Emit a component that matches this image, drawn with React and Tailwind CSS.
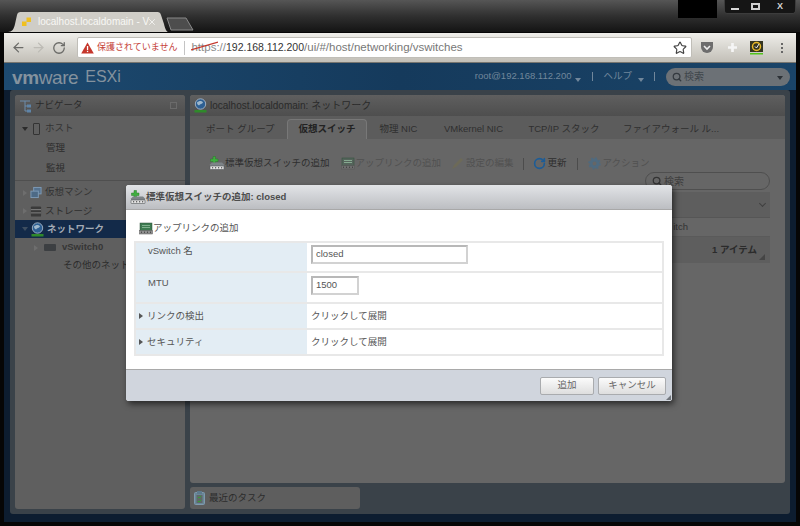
import { ArrowLeft, ArrowRight, RotateCw, Star, Search, X } from "lucide-react";

const fontStack = { fontFamily: '"Liberation Sans", "Noto Sans CJK JP", sans-serif' };

const Caret = ({ className = "border-t-[#38434d]" }) => (
  <span className={`inline-block w-0 h-0 border-x-[3px] border-x-transparent border-t-[4px] ${className}`} />
);

const SideArrow = ({ className = "border-l-[#505050]" }) => (
  <span className={`inline-block w-0 h-0 border-y-[3.5px] border-y-transparent border-l-[4px] ${className}`} />
);

const GlobeIcon = () => (
  <svg width="13" height="15" viewBox="0 0 13 15" className="shrink-0">
    <circle cx="6.5" cy="6" r="5.2" fill="#2d5f93" stroke="#b4c2d0" strokeWidth="0.8" />
    <path d="M3 4.5c2-2 5-2 6 0-1 2-3 1-4 3-1-1-2-1-2-3z" fill="#9fb8cc" />
    <rect x="0.5" y="12" width="12" height="2.5" fill="#2f8a2a" />
  </svg>
);

const AddSwitchIcon = () => (
  <svg width="16" height="15" viewBox="0 0 16 15" className="shrink-0">
    <path d="M4 0.5h2.5v2.5H9v2.5H6.5V8H4V5.5H1.5V3H4z" fill="#3fae3f" stroke="#2a7a2a" strokeWidth="0.5" />
    <path d="M1 8.5L3 6.5H13L15 8.5V10H1Z" fill="#7d8387" />
    <rect x="1" y="10" width="14" height="3.5" rx="0.5" fill="#e2e2e2" stroke="#55595c" strokeWidth="0.6" />
    <path d="M3 11.8h1.2M6 11.8h1.2M9 11.8h1.2M12 11.8h1.2" stroke="#333" />
  </svg>
);

const UplinkIcon = ({ top = "#3d7a50", base = "#8f8f8f" }) => (
  <svg width="16" height="15" viewBox="0 0 16 15" className="shrink-0">
    <rect x="2" y="2" width="12" height="7.5" fill={top} stroke="#2f4f3a" strokeWidth="0.5" />
    <path d="M4 4.5h8M4 6.5h8" stroke="#9cc7a8" strokeWidth="0.7" />
    <rect x="1.5" y="9.5" width="13" height="3.5" fill={base} stroke="#555" strokeWidth="0.5" />
    <path d="M3 11.2h1M6 11.2h1M9 11.2h1M12 11.2h1" stroke="#333" />
  </svg>
);

const NavRow = ({ children, className = "", pl = "pl-[22px]" }) => (
  <div className={`flex items-center gap-[3px] text-[9.5px] text-[#2c2c2c] whitespace-nowrap ${pl} ${className}`}>{children}</div>
);

const FormRow = ({ label, arrow, height, children, labelPad, valuePad }) => (
  <div className={`flex border-b-2 border-[#e8e8e8] last:border-b-0 ${height}`}>
    <div className={`w-[171px] bg-[#e3edf4] flex text-[9.5px] text-[#555] ${arrow ? "items-center pl-[3px] gap-[4px]" : `pl-[12px] ${labelPad}`}`}>
      {arrow && <SideArrow className="border-l-[#555]" />}
      <span>{label}</span>
    </div>
    <div className={`flex-1 text-[9.5px] text-[#555] pl-[4px] ${arrow ? "flex items-center" : valuePad}`}>{children}</div>
  </div>
);

const TextBox = ({ width, value }) => (
  <div className={`${width} h-[19px] border-2 border-[#d2d2d2] border-t-[#b8b8b8] border-l-[#b8b8b8] bg-white flex items-center px-[3px] text-[9.5px] text-[#555]`}>{value}</div>
);

const FooterButton = ({ width, children }) => (
  <button className={`${width} h-[18px] rounded-[2px] border border-[#a9abae] bg-gradient-to-b from-[#fbfbfb] to-[#dedede] text-[9.5px] text-[#666] flex items-center justify-center`}>
    {children}
  </button>
);

export default function App() {
  return (
    <div style={fontStack} className="relative w-[800px] h-[526px] overflow-hidden bg-[#060606] flex flex-col">
      {/* window title bar */}
      <div className="h-[32px] shrink-0 flex bg-gradient-to-b from-[#565656] via-[#303030] to-[#141414] pl-[8px]">
        <div className="relative w-[160px] h-[21px] mt-[11px] flex items-center">
          <svg className="absolute inset-0" width="160" height="21" viewBox="0 0 160 21" preserveAspectRatio="none">
            <path d="M0 21C4 21 6 18 7 13L9 4C10 1 11 1 14 1H148C151 1 152 1 153 4L156 13C157 18 159 21 160 21Z" fill="#cfcdc7" />
          </svg>
          <svg className="absolute left-[14px] top-[6px]" width="10" height="10" viewBox="0 0 10 10">
            <rect x="4.5" y="0.5" width="4.5" height="4.5" fill="#f0c020" />
            <rect x="0" y="4.5" width="4.5" height="4.5" fill="#f0c020" />
          </svg>
          <span className="relative ml-[30px] w-[109px] text-[10px] text-[#f8f8f5] whitespace-nowrap">localhost.localdomain - V</span>
          <X className="relative text-[#f6f6f4]" size={10} strokeWidth={2} />
        </div>
        <svg className="mt-[17px] ml-[-2px]" width="28" height="14" viewBox="0 0 28 14">
          <path d="M1 1H20L27 13H5Z" fill="#4d4d4d" stroke="#8a8a8a" />
        </svg>
        <div className="ml-auto flex items-start">
          <div className="w-[39px] h-[18px] bg-black" />
          <div className="ml-[7px] mr-[4px] w-[72px] h-[14px] rounded-b-[3px] bg-[#151515] border border-[#3c3c3c] border-t-0 flex items-center text-[#d4d4d4]">
            <span className="w-[20px] flex justify-center pt-[5px]"><span className="block w-[8px] h-[2px] bg-[#d8d8d8]" /></span>
            <span className="w-[20px] flex justify-center"><span className="block w-[9px] h-[7px] border-2 border-[#d0d0d0]" /></span>
            <span className="flex-1 text-center text-[9px] font-bold leading-none">X</span>
          </div>
        </div>
      </div>

      {/* browser frame */}
      <div className="flex-1 mx-[4px] mb-[4px] mt-[1px] flex flex-col min-h-0">
        {/* browser toolbar */}
        <div className="h-[30px] shrink-0 flex items-center bg-gradient-to-b from-[#efeeea] to-[#c2bfb7] border-b border-[#77756f] pl-[7px] pr-[7px]">
          <ArrowLeft size={15} strokeWidth={2} className="text-[#6b6b68]" />
          <ArrowRight size={15} strokeWidth={2} className="text-[#bdbbb5] ml-[5px]" />
          <RotateCw size={14} strokeWidth={2.2} className="text-[#6b6b68] ml-[6px]" />
          <div className="ml-[11px] w-[615px] h-[21px] bg-white rounded-[2px] border border-[#c0beb8] flex items-center pl-[3px] pr-[2px]">
            <svg width="13" height="12" viewBox="0 0 13 12">
              <path d="M6.5 0.5L12.8 11.5H0.2Z" fill="#c5372c" />
              <rect x="5.9" y="4" width="1.3" height="4" fill="#fff" />
              <rect x="5.9" y="8.8" width="1.3" height="1.3" fill="#fff" />
            </svg>
            <span className="ml-[3px] text-[9px] text-[#c5433a] whitespace-nowrap">保護されていません</span>
            <span className="ml-[7px] w-px h-[14px] bg-[#c4c4c4]" />
            <span className="relative ml-[6px] text-[11.5px] text-[#8a8a8a]">
              https
              <svg className="absolute left-0 top-[2px]" width="27" height="10" viewBox="0 0 27 10">
                <path d="M0 9L27 1" stroke="#c5372c" strokeWidth="1.2" />
              </svg>
            </span>
            <span className="text-[11.5px] text-[#8a8a8a]">://</span>
            <span className="text-[10.5px] text-[#333]">192.168.112.200</span>
            <span className="text-[11.5px] text-[#777]">/ui/#/host/networking/vswitches</span>
            <Star size={14} strokeWidth={2} className="ml-auto mr-[2px] text-[#444]" />
          </div>
          <svg className="ml-[8px]" width="14" height="13" viewBox="0 0 14 13">
            <path d="M1 1H13V6A6 6 0 0 1 1 6Z" fill="#6d6d6d" />
            <path d="M4 5L7 8L10 5" stroke="#eee" strokeWidth="1.6" fill="none" />
          </svg>
          <svg className="ml-[14px]" width="9" height="9" viewBox="0 0 10 10">
            <path d="M3.5 0H6.5V3.5H10V6.5H6.5V10H3.5V6.5H0V3.5H3.5Z" fill="#f5f5f5" />
          </svg>
          <svg className="ml-[13px]" width="13" height="14" viewBox="0 0 13 14">
            <rect width="13" height="11" fill="#353520" />
            <circle cx="6.5" cy="5.5" r="4" fill="none" stroke="#e8b828" strokeWidth="1.5" />
            <path d="M5 5.5L6.5 7L9 3" stroke="#f2f2f2" fill="none" />
            <rect y="12" width="13" height="1.5" fill="#52c41a" />
          </svg>
          <span className="ml-[18px] flex flex-col gap-[2px]">
            <span className="block w-[2px] h-[2px] bg-[#666]" />
            <span className="block w-[2px] h-[2px] bg-[#666]" />
            <span className="block w-[2px] h-[2px] bg-[#666]" />
          </span>
        </div>

        {/* ESXi app, dimmed behind the dialog */}
        <div className="flex-1 min-h-0 flex flex-col bg-[#0d1d30]">
          <div className="h-[27px] shrink-0 flex items-center bg-gradient-to-r from-[#1d4a70] via-[#153a5c] to-[#1a4468] pl-[8px] pr-[6px]">
            <span className="text-[19px] leading-none tracking-[-0.4px] text-[#84929e] pt-[1px]">
              <span className="font-bold">vm</span>ware
            </span>
            <span className="ml-[7px] text-[16px] leading-none text-[#84929e] pt-[1px]">ESXi</span>
            <span className="ml-auto text-[9.5px] text-[#71879b]">root@192.168.112.200</span>
            <span className="ml-[4px]"><Caret className="border-t-[#71879b]" /></span>
            <span className="ml-[11px] w-px h-[9px] bg-[#71879b]" />
            <span className="ml-[10px] text-[9.5px] text-[#71879b]">ヘルプ</span>
            <span className="ml-[6px]"><Caret className="border-t-[#71879b]" /></span>
            <span className="ml-[10px] w-px h-[9px] bg-[#71879b]" />
            <div className="ml-[11px] w-[124px] h-[18px] rounded-full bg-[#6c7176] flex items-center pl-[6px] pr-[7px] gap-[2px] text-[10px] text-[#3f464c]">
              <Search size={10} strokeWidth={3} className="text-[#33393f]" />
              <span>検索</span>
              <span className="ml-auto"><Caret className="border-t-[#2c3136]" /></span>
            </div>
          </div>

          <div className="flex-1 min-h-0 mx-[6px] mb-[8px] rounded-[3px] bg-[#3a4249] p-[5px] flex gap-[5px]">
            {/* navigator */}
            <div className="w-[170px] shrink-0 rounded-[3px] bg-[#5f5f5f] overflow-hidden flex flex-col">
              <div className="h-[21px] shrink-0 flex items-center pl-[4px] pr-[8px] gap-[3px] bg-gradient-to-b from-[#5f5f5f] to-[#4e4e4e] text-[9.5px] text-[#2a2a2a]">
                <svg width="13" height="14" viewBox="0 0 13 14">
                  <path d="M1 2H11M6 2V12H10M6 7H10" stroke="#6d8cab" fill="none" />
                  <rect x="8" y="5.5" width="4" height="3" fill="#5e84a8" />
                  <rect x="8" y="10.5" width="4" height="3" fill="#5e84a8" />
                </svg>
                <span>ナビゲータ</span>
                <span className="ml-auto w-[7px] h-[7px] border border-[#6b6b6b]" />
              </div>
              <div className="flex flex-col pt-[3px]">
                <NavRow className="h-[19px]" pl="pl-[7px]">
                  <Caret className="border-t-[#2b2b2b]" />
                  <span className="ml-[2px] w-[7px] h-[12px] rounded-[1px] border border-[#333]" />
                  <span className="ml-[2px] text-[#333]">ホスト</span>
                </NavRow>
                <NavRow className="h-[20px]" pl="pl-[31px]">管理</NavRow>
                <NavRow className="h-[20px]" pl="pl-[31px]">監視</NavRow>
                <div className="h-[3px] border-b border-[#4f4f4f] mb-[2px]" />
                <NavRow className="h-[19px]" pl="pl-[8px]">
                  <SideArrow className="border-l-[#6e6e6e]" />
                  <svg width="12" height="13" viewBox="0 0 13 13">
                    <rect x="4" y="1" width="8" height="7" fill="#55728f" stroke="#7f9cb8" />
                    <rect x="1" y="5" width="8" height="7" fill="#4d6a86" stroke="#7f9cb8" />
                  </svg>
                  <span className="text-[#333]">仮想マシン</span>
                </NavRow>
                <NavRow className="h-[18px]" pl="pl-[8px]">
                  <SideArrow className="border-l-[#6e6e6e]" />
                  <svg width="12" height="13" viewBox="0 0 13 13">
                    <rect x="1" y="1" width="11" height="11" rx="1" fill="#3a3a3a" />
                    <path d="M1 4.5H12M1 8H12" stroke="#888" />
                  </svg>
                  <span className="text-[#2e2e2e]">ストレージ</span>
                </NavRow>
                <NavRow className="h-[18px] bg-[#132a49]" pl="pl-[7px]">
                  <Caret className="border-t-[#3e4e60]" />
                  <GlobeIcon />
                  <span className="text-[#a3abb5] font-bold">ネットワーク</span>
                </NavRow>
                <NavRow className="h-[19px]" pl="pl-[19px]">
                  <SideArrow className="border-l-[#6e6e6e]" />
                  <span className="ml-[3px] w-[12px] h-[7px] bg-[#3c3f42] rounded-[1px]" />
                  <span className="ml-[3px] text-[9.5px] font-bold text-[#363636]">vSwitch0</span>
                </NavRow>
                <NavRow className="h-[16px]" pl="pl-[48px]">その他のネットワーク</NavRow>
              </div>
            </div>

            {/* main column */}
            <div className="flex-1 min-w-0 flex flex-col gap-[4px]">
              <div className="flex-1 min-h-0 rounded-[3px] bg-[#666666] overflow-hidden flex flex-col">
                <div className="h-[21px] shrink-0 flex items-center pl-[4px] gap-[3px] bg-gradient-to-b from-[#5f5f5f] to-[#4e4e4e] text-[10px] text-[#2a2a2a]">
                  <GlobeIcon />
                  <span>localhost.localdomain: ネットワーク</span>
                </div>
                <div className="h-[23px] shrink-0 flex items-end bg-[#5c5c5c] text-[9.5px] text-[#2f2f2f]">
                  <span className="w-[97px] h-[20px] pl-[16px] flex items-center">ポート グループ</span>
                  <span className="w-[80px] h-[20px] rounded-t-[4px] border border-b-0 border-[#787878] bg-[#666666] flex items-center justify-center font-bold text-[#222]">仮想スイッチ</span>
                  <span className="w-[63px] h-[20px] flex items-center justify-center">物理 NIC</span>
                  <span className="w-[87px] h-[20px] flex items-center justify-center">VMkernel NIC</span>
                  <span className="w-[94px] h-[20px] flex items-center justify-center">TCP/IP スタック</span>
                  <span className="w-[120px] h-[20px] flex items-center justify-center whitespace-nowrap">ファイアウォール ル...</span>
                </div>
                <div className="h-[33px] shrink-0 mt-[8px] flex items-center pl-[19px] text-[9.5px] text-[#2e2e2e] whitespace-nowrap">
                  <AddSwitchIcon />
                  <span>標準仮想スイッチの追加</span>
                  <span className="ml-[10px]"><UplinkIcon top="#55645b" base="#6e6e6e" /></span>
                  <span className="text-[#515151]">アップリンクの追加</span>
                  <svg className="ml-[10px]" width="13" height="13" viewBox="0 0 13 13">
                    <path d="M1 12L3 8L10 1L12 3L5 10Z" fill="#6d6a58" />
                  </svg>
                  <span className="ml-[2px] text-[#515151]">設定の編集</span>
                  <span className="ml-[9px] w-px h-[12px] bg-[#4c4c4c]" />
                  <RotateCw size={13} strokeWidth={3} className="ml-[9px] text-[#1d5c96]" />
                  <span className="ml-[2px]">更新</span>
                  <span className="ml-[10px] w-px h-[12px] bg-[#4c4c4c]" />
                  <svg className="ml-[10px]" width="13" height="13" viewBox="0 0 13 13">
                    <circle cx="6.5" cy="6.5" r="3.5" fill="none" stroke="#4f6a7f" strokeWidth="3" />
                    <circle cx="6.5" cy="6.5" r="5.5" fill="none" stroke="#4f6a7f" strokeWidth="1.5" strokeDasharray="2 2.3" />
                  </svg>
                  <span className="ml-[2px] text-[#515151]">アクション</span>
                </div>
                <div className="flex justify-end pr-[15px] mt-[-8px]">
                  <div className="w-[125px] h-[18px] rounded-full border border-[#4f4f4f] flex items-center pl-[6px] gap-[2px] text-[10px] text-[#3e3e3e]">
                    <Search size={10} strokeWidth={3} className="text-[#333]" />
                    <span>検索</span>
                  </div>
                </div>
                <div className="ml-auto mr-[15px] mt-[2px] w-[125px] bg-[#5e5e5e] flex flex-col text-[9.5px] text-[#333]">
                  <div className="h-[26px] flex items-center justify-end pr-[5px] border-b border-[#565656]">
                    <span className="w-[5px] h-[5px] border-r border-b border-[#404040] rotate-45 mb-[3px]" />
                  </div>
                  <div className="h-[19px] bg-[#666666] flex items-center justify-end pr-[82px] border-b border-[#5a5a5a]">itch</div>
                  <div className="relative h-[26px] flex items-center justify-end pr-[13px] font-bold text-[#2b2b2b]">
                    1 アイテム
                    <svg className="absolute right-[5px] bottom-[3px]" width="6" height="6" viewBox="0 0 6 6">
                      <path d="M6 0V6H0Z" fill="#454545" />
                    </svg>
                  </div>
                </div>
              </div>

              <div className="w-[170px] h-[22px] shrink-0 rounded-[3px] bg-[#5e5e5e] flex items-center pl-[4px] gap-[4px] text-[9.5px] text-[#2c2c2c]">
                <svg width="11" height="14" viewBox="0 0 11 14">
                  <rect x="0.5" y="1.5" width="10" height="12" rx="1" fill="#6a8699" stroke="#7f9aad" />
                  <rect x="3" y="0" width="5" height="3" fill="#5d7a8e" />
                  <rect x="2.5" y="4" width="6" height="8" fill="#5f6a66" />
                  <path d="M4 6l1 1 2-2M4 10l1 1 2-2" stroke="#35a035" fill="none" />
                </svg>
                <span>最近のタスク</span>
              </div>
            </div>
          </div>
        </div>
      </div>

      {/* add standard vSwitch dialog */}
      <div className="absolute left-[126px] top-[185px] w-[546px] h-[216px] rounded-[3px] overflow-hidden bg-white flex flex-col shadow-[2px_3px_6px_rgba(0,0,0,0.6)]">
        <div className="h-[25px] shrink-0 flex items-center pl-[4px] bg-gradient-to-b from-[#e2e4e7] to-[#bcbec2] border-b border-[#a8a8a8] text-[9.5px] font-bold text-[#4c4c4c]">
          <AddSwitchIcon />
          <span>標準仮想スイッチの追加: closed</span>
        </div>
        <div className="flex-1 min-h-0 px-[8px] flex flex-col">
          <div className="h-[31px] shrink-0 flex items-center pl-[4px] pt-[5px] text-[9.5px] text-[#555]">
            <UplinkIcon />
            <span className="ml-[-1px]">アップリンクの追加</span>
          </div>
          <div className="w-[530px] border-2 border-[#e8e8e8] flex flex-col">
            <FormRow label="vSwitch 名" height="h-[30px]" labelPad="pt-[1px]" valuePad="pt-[2px]">
              <TextBox width="w-[157px]" value="closed" />
            </FormRow>
            <FormRow label="MTU" height="h-[31px]" labelPad="pt-[3px]" valuePad="pt-[3px]">
              <TextBox width="w-[48px]" value="1500" />
            </FormRow>
            <FormRow label="リンクの検出" arrow height="h-[26px]">クリックして展開</FormRow>
            <FormRow label="セキュリティ" arrow height="h-[24px]">クリックして展開</FormRow>
          </div>
        </div>
        <div className="relative h-[32px] shrink-0 border-t border-[#a9a9a9] bg-[#d0d5dd] flex items-center justify-end gap-[4px] pr-[6px]">
          <FooterButton width="w-[54px]">追加</FooterButton>
          <FooterButton width="w-[68px]">キャンセル</FooterButton>
          <svg className="absolute right-[1px] bottom-[1px]" width="5" height="5" viewBox="0 0 5 5">
            <path d="M5 0V5H0Z" fill="#71767c" />
          </svg>
        </div>
      </div>
    </div>
  );
}
